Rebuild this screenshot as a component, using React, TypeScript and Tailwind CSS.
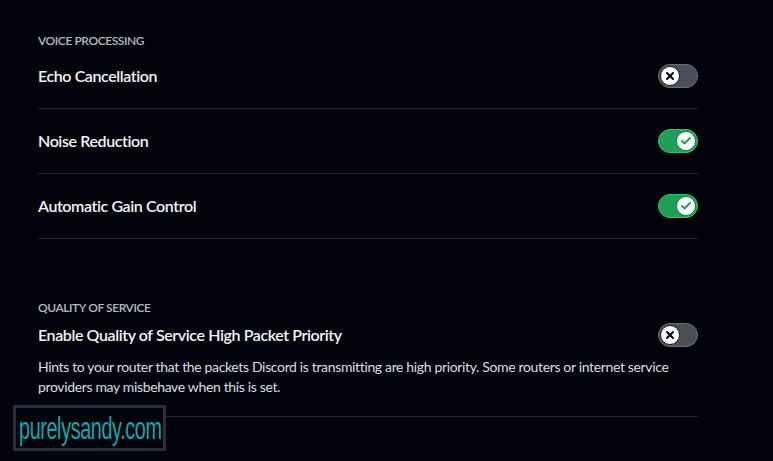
import { Check, X } from "lucide-react";

type ToggleProps = { on: boolean };

const Toggle = ({ on }: ToggleProps) => (
  <div
    className={
      on
        ? "relative h-6 w-10 shrink-0 rounded-full border border-[#2fc46e] bg-[#1f9e58]"
        : "relative h-6 w-10 shrink-0 rounded-full border border-[#6b6e76] bg-[#4b4e56]"
    }
  >
    <div
      className={
        on
          ? "absolute top-[1px] right-[1px] flex h-5 w-5 items-center justify-center rounded-full border border-[#15803d] bg-white"
          : "absolute top-[1px] left-[1px] flex h-5 w-5 items-center justify-center rounded-full border border-[#1a1b1f] bg-white"
      }
    >
      {on ? (
        <Check className="h-3 w-3 text-[#1f9e58]" strokeWidth={4} />
      ) : (
        <X className="h-3 w-3 text-black" strokeWidth={4} />
      )}
    </div>
  </div>
);

type RowProps = { title: string; on: boolean; first?: boolean };

const Row = ({ title, on, first }: RowProps) => (
  <div className={first ? "border-b border-[#26282e] pb-5" : "border-b border-[#26282e] py-5"}>
    <div className="flex h-6 items-center justify-between">
      <span className="text-[16px] font-semibold tracking-[-0.025em] text-[#f2f3f5]">{title}</span>
      <Toggle on={on} />
    </div>
  </div>
);

export default function App() {
  return (
    <div
      className="relative h-[461px] w-[773px] overflow-hidden bg-[#03040b]"
      style={{ fontFamily: "Lato, 'Noto Sans', sans-serif" }}
    >
      <div className="w-[660px] ml-[38px] pt-[33px]">
        <h2 className="mb-[15px] h-4 text-[12px] leading-4 font-semibold uppercase tracking-[-0.035em] text-[#b5bac1]">
          Voice Processing
        </h2>
        <Row title="Echo Cancellation" on={false} first />
        <Row title="Noise Reduction" on />
        <Row title="Automatic Gain Control" on />

        <h2 className="mt-[61px] mb-[7px] h-4 text-[12px] leading-4 font-semibold uppercase tracking-[-0.035em] text-[#b5bac1]">
          Quality of Service
        </h2>
        <div className="border-b border-[#26282e] pb-[19px]">
          <div className="flex h-6 items-center justify-between">
            <span className="text-[16px] font-semibold tracking-[-0.025em] text-[#f2f3f5]">
              Enable Quality of Service High Packet Priority
            </span>
            <Toggle on={false} />
          </div>
          <p className="mt-[10px] text-[14px] leading-5 tracking-[-0.025em] text-[#dbdee1]">
            Hints to your router that the packets Discord is transmitting are high priority. Some
            routers or internet service providers may misbehave when this is set.
          </p>
        </div>
      </div>

      {/* watermark */}
      <div className="absolute left-[13px] top-[405px] flex h-[46px] w-[153px] items-center overflow-hidden border-[3px] border-[#2a2f36] bg-[#03040b] pl-[3px]">
        <span
          className="inline-block shrink-0 origin-left scale-x-[0.64] whitespace-nowrap text-[31px] leading-none tracking-[-0.02em] text-[#17a5ae]"
          style={{ fontFamily: "'Liberation Sans', Arial, sans-serif" }}
        >
          purelysandy.com
        </span>
      </div>
    </div>
  );
}
